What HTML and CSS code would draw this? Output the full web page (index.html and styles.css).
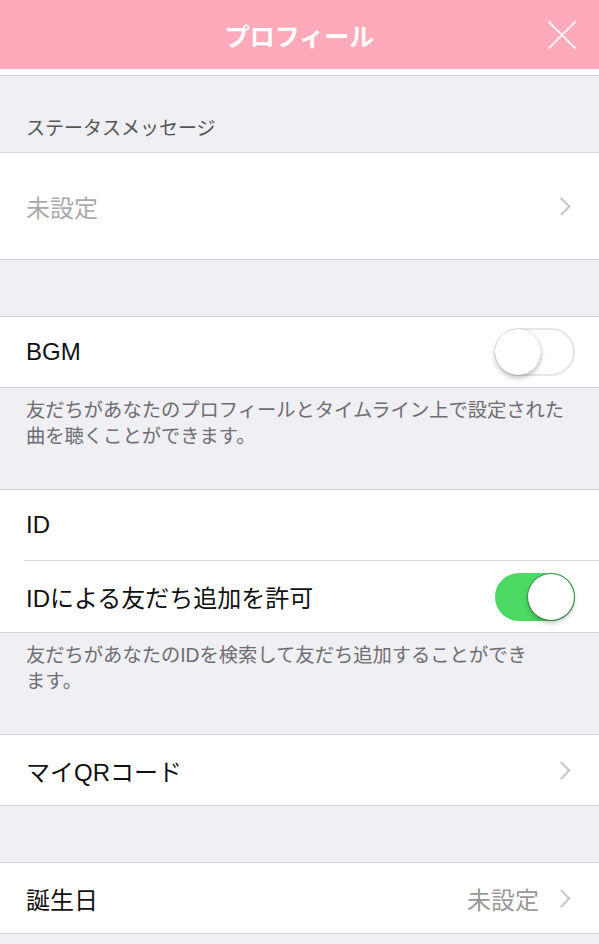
FILE: index.html
```html
<!DOCTYPE html>
<html lang="ja">
<head>
    <meta charset="UTF-8">
    <meta name="viewport" content="width=device-width, initial-scale=1.0">
    <title>プロフィール</title>
    <link rel="stylesheet" href="styles.css">
</head>
<body>
    <header class="topbar">
        <h1 class="topbar-title">プロフィール</h1>
        <button class="close-btn" aria-label="閉じる">
            <svg width="30" height="30" viewBox="0 0 30 30">
                <path d="M2 2 L28 28 M28 2 L2 28" stroke="#fff" stroke-width="2" fill="none" stroke-linecap="round"/>
            </svg>
        </button>
    </header>
    <div class="topbar-gap"></div>

    <div class="section-title">ステータスメッセージ</div>
    <div class="group">
        <div class="row row-tall">
            <div class="row-inner">
                <span class="label muted">未設定</span>
                <span class="chevron"></span>
            </div>
        </div>
    </div>

    <div class="spacer"></div>
    <div class="group">
        <div class="row">
            <div class="row-inner">
                <span class="label">BGM</span>
                <span class="switch"><span class="knob"></span></span>
            </div>
        </div>
    </div>
    <p class="note">友だちがあなたのプロフィールとタイムライン上で設定された<br>曲を聴くことができます。</p>

    <div class="group">
        <div class="row">
            <div class="row-inner">
                <span class="label">ID</span>
            </div>
        </div>
        <div class="row">
            <div class="row-inner">
                <span class="label">IDによる友だち追加を許可</span>
                <span class="switch on"><span class="knob"></span></span>
            </div>
        </div>
    </div>
    <p class="note">友だちがあなたのIDを検索して友だち追加することができ<br>ます。</p>

    <div class="group">
        <div class="row">
            <div class="row-inner">
                <span class="label">マイQRコード</span>
                <span class="chevron"></span>
            </div>
        </div>
    </div>

    <div class="spacer"></div>
    <div class="group">
        <div class="row">
            <div class="row-inner">
                <span class="label">誕生日</span>
                <span class="value">未設定</span>
                <span class="chevron"></span>
            </div>
        </div>
    </div>
</body>
</html>
```

FILE: styles.css
```css
body {
    margin: 0;
    background-color: #efeff4;
    font-family: "Liberation Sans", "Noto Sans CJK JP", sans-serif;
    color: #111;
}

/* ヘッダー */
.topbar {
    height: 69px;
    background-color: #feaaba;
    display: flex;
    align-items: center;
    justify-content: center;
    position: relative;
}

.topbar-title {
    margin: 0;
    color: #fff;
    font-size: 25px;
    font-weight: bold;
}

.close-btn {
    position: absolute;
    right: 22px;
    top: 20px;
    background: none;
    border: none;
    padding: 0;
    opacity: 0.85;
}

.topbar-gap {
    height: 6px;
    background-color: #fff;
    border-bottom: 1px solid #d3d3d8;
}

.section-title {
    height: 76px;
    box-sizing: border-box;
    padding: 37px 26px 0;
    font-size: 19px;
    color: #555;
}

.group {
    background-color: #fff;
    border-top: 1px solid #d3d3d8;
    border-bottom: 1px solid #d3d3d8;
}

.row {
    padding-left: 24px;
}

.row + .row .row-inner {
    border-top: 1px solid #d8d8dc;
    height: 71px;
}

.row-inner {
    height: 70px;
    display: flex;
    align-items: center;
    padding: 0 26px 0 2px;
    font-size: 24px;
}

.row-tall .row-inner {
    height: 106px;
}

.label {
    flex-grow: 1;
}

.muted {
    color: #aaa;
}

.value {
    color: #999;
    margin-right: 16px;
}

.chevron {
    width: 11px;
    height: 11px;
    border-top: 2px solid #c7c7cc;
    border-right: 2px solid #c7c7cc;
    transform: rotate(45deg);
    margin-right: 5px;
}

.spacer {
    height: 56px;
}

.note {
    margin: 0;
    padding: 10px 26px 39px;
    font-size: 19.3px;
    line-height: 26px;
    color: #6d6d72;
}

/* トグル */
.switch {
    width: 80px;
    height: 48px;
    box-sizing: border-box;
    border-radius: 24px;
    border: 2px solid #e5e5ea;
    background-color: #fff;
    position: relative;
    margin-right: -2px;
}

.knob {
    position: absolute;
    left: -2px;
    top: -1px;
    width: 46px;
    height: 46px;
    border-radius: 50%;
    background-color: #fff;
    box-shadow: 0 3px 5px rgba(0, 0, 0, 0.25), 0 0 1px rgba(0, 0, 0, 0.3);
}

.switch.on {
    background-color: #4cd964;
    border-color: #4cd964;
}

.switch.on .knob {
    left: auto;
    right: -1px;
    box-shadow: 0 3px 5px rgba(0, 0, 0, 0.25), 0 0 0 1px #4a9a5a;
}
```
